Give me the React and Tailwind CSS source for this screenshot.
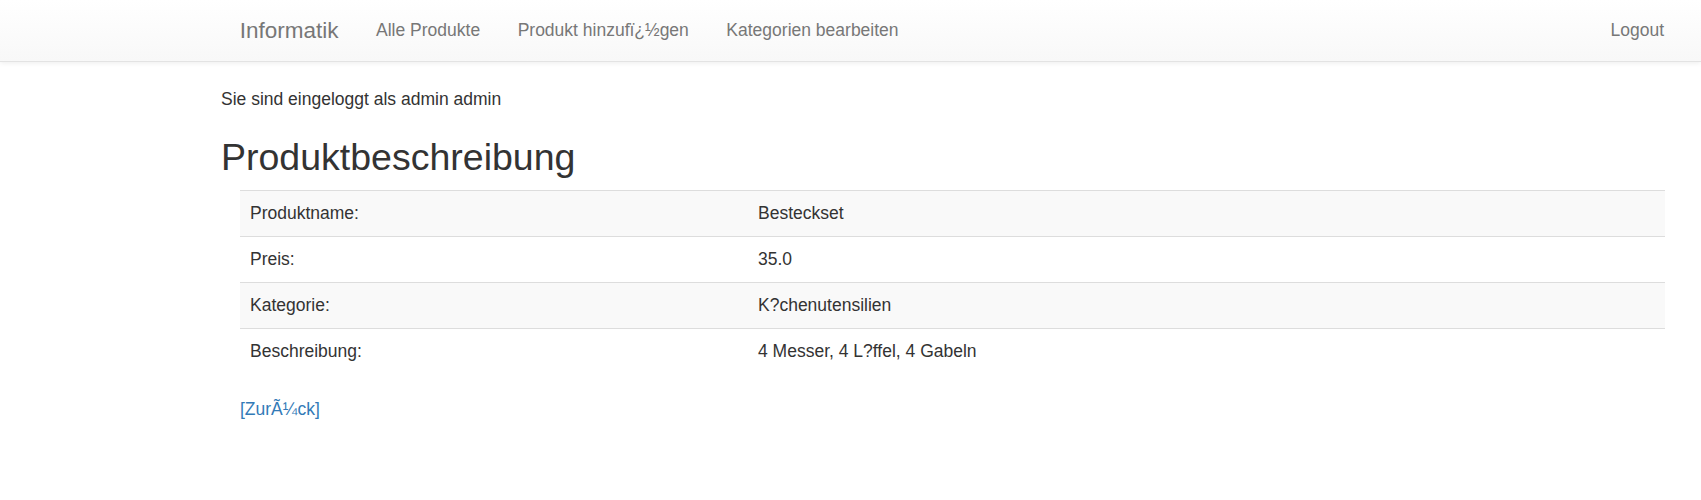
import React from "react";

const rows = [
  { label: "Produktname:", value: "Besteckset" },
  { label: "Preis:", value: "35.0" },
  { label: "Kategorie:", value: "K?chenutensilien" },
  { label: "Beschreibung:", value: "4 Messer, 4 L?ffel, 4 Gabeln" },
];

export default function App() {
  return (
    <div className="min-h-[500px] bg-white font-['Liberation_Sans',Arial,sans-serif] text-[17.5px] leading-[25px] text-[#333]">
      <nav className="flex h-[62px] items-center border-b border-[#e3e3e3] bg-gradient-to-b from-white to-[#f8f8f8] pl-[221px] pr-[18px] shadow-[0_1px_5px_rgba(0,0,0,0.075)]">
        <a className="px-[18.75px] text-[22.5px] leading-[25px] text-[#777]">Informatik</a>
        <ul className="flex">
          <li><a className="block px-[18.75px] text-[#777]">Alle Produkte</a></li>
          <li><a className="block px-[18.75px] text-[#777]">Produkt hinzufï¿½gen</a></li>
          <li><a className="block px-[18.75px] text-[#777]">Kategorien bearbeiten</a></li>
        </ul>
        <a className="ml-auto px-[19px] text-[#777]">Logout</a>
      </nav>

      <div className="pl-[221px] pr-[36px] pt-[25px]">
        <p>Sie sind eingeloggt als admin admin</p>
        <h1 className="mt-[25px] text-[37.5px] leading-[41px]">Produktbeschreibung</h1>

        <div className="ml-[19px] mt-[12px]">
          <table className="w-full border-collapse">
            <tbody>
              {rows.map((r, i) => (
                <tr key={r.label} className={i % 2 === 0 ? "bg-[#f9f9f9]" : ""}>
                  <td className="w-[508px] border-t border-[#ddd] p-[10px]">{r.label}</td>
                  <td className="border-t border-[#ddd] p-[10px]">{r.value}</td>
                </tr>
              ))}
            </tbody>
          </table>

          <p className="mt-[23px]">
            <a className="text-[#337ab7]">[ZurÃ¼ck]</a>
          </p>
        </div>
      </div>
    </div>
  );
}
